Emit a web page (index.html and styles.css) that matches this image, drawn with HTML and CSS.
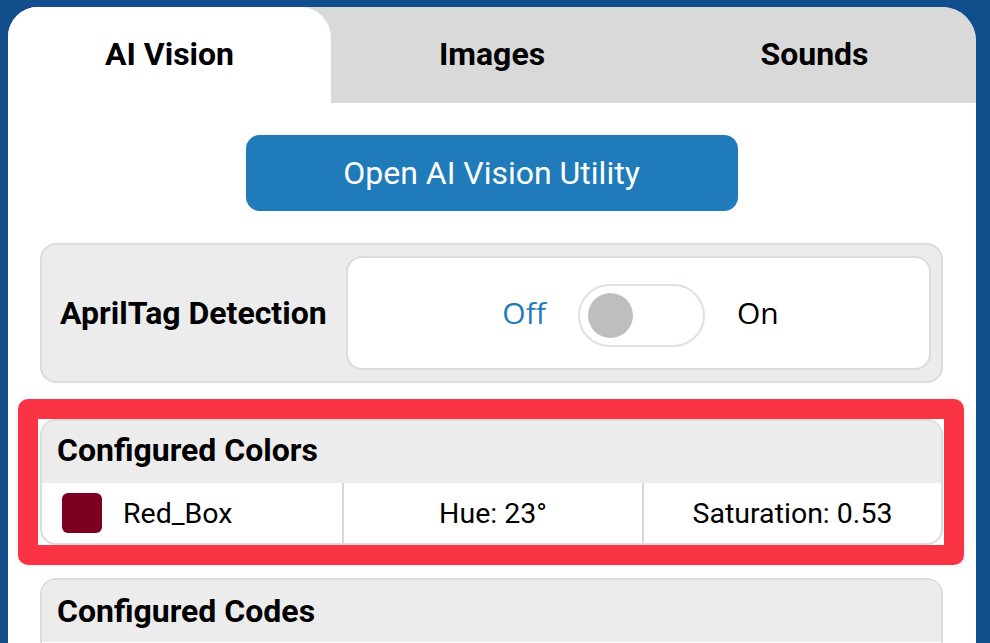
FILE: index.html
```html
<!DOCTYPE html>
<html>
<head>
<meta charset="utf-8">
<link rel="stylesheet" href="styles.css">
</head>
<body>
<div class="panel">
  <div class="tabs">
    <div class="tab active">AI Vision</div>
    <div class="tab">Images</div>
    <div class="tab">Sounds</div>
  </div>
  <div class="content">
    <div class="btn">Open AI Vision Utility</div>
    <div class="april">
      <div class="april-label">AprilTag Detection</div>
      <div class="switch-box">
        <span class="opt off">Off</span>
        <span class="toggle"><span class="knob"></span></span>
        <span class="opt">On</span>
      </div>
    </div>
    <div class="highlight">
      <div class="card">
        <div class="card-head">Configured Colors</div>
        <div class="card-row">
          <div class="cell first"><span class="swatch"></span><span>Red_Box</span></div>
          <div class="cell">Hue: 23°</div>
          <div class="cell">Saturation: 0.53</div>
        </div>
      </div>
    </div>
    <div class="card codes">
      <div class="card-head">Configured Codes</div>
      <div class="card-row"></div>
    </div>
  </div>
</div>
</body>
</html>
```
FILE: styles.css
```css
html, body {
  margin: 0;
  padding: 0;
  background: #124e8c;
  font-family: Roboto, "Liberation Sans", sans-serif;
  color: #000;
  overflow: hidden;
}
.panel {
  margin: 7px 0 0 8px;
  width: 968px;
  height: 660px;
  background: #fff;
  border-radius: 30px 34px 0 0;
  overflow: hidden;
}
.tabs {
  display: grid;
  grid-template-columns: 323px 322px 323px;
  height: 96px;
  background: #d9d9d9;
}
.tab {
  display: flex;
  align-items: center;
  justify-content: center;
  font-weight: 700;
  font-size: 32px;
  padding-bottom: 2px;
}
.tab.active {
  background: #fff;
  border-top-right-radius: 31px;
}
.content {
  padding: 32px 33px 0 32px;
  display: flex;
  flex-direction: column;
}
.btn {
  align-self: center;
  width: 492px;
  height: 76px;
  background: #1f7bb9;
  border-radius: 14px;
  color: #fff;
  font-size: 32px;
  display: flex;
  align-items: center;
  justify-content: center;
}
.april {
  margin-top: 32px;
  height: 140px;
  box-sizing: border-box;
  background: #edeced;
  border: 2px solid #dcdcdc;
  border-radius: 16px;
  display: flex;
  align-items: center;
  padding: 0 10px 0 18px;
}
.april-label {
  font-weight: 700;
  font-size: 32px;
  width: 286px;
}
.switch-box {
  flex: 1;
  height: 114px;
  box-sizing: border-box;
  background: #fff;
  border: 2px solid #dcdcdc;
  border-radius: 16px;
  display: flex;
  align-items: center;
  justify-content: center;
  gap: 32px;
  padding-left: 4px;
}
.opt {
  font-family: "Open Sans", Roboto, sans-serif;
  font-size: 30px;
  padding-bottom: 2px;
}
.opt.off {
  color: #1f7bb9;
}
.toggle {
  width: 127px;
  height: 63px;
  margin-top: 5px;
  box-sizing: border-box;
  border: 2px solid #dde1e6;
  border-radius: 32px;
  display: flex;
  align-items: center;
  padding-left: 8px;
}
.knob {
  width: 45px;
  height: 45px;
  border-radius: 50%;
  background: #bebebe;
}
.highlight {
  margin: 16px -21px 0 -22px;
  border: 20px solid #fa3444;
  border-radius: 10px;
  background: #fff;
  padding: 0 1px 0 2px;
  box-shadow: 0 0 6px rgba(0,0,0,0.08);
}
.card {
  box-sizing: border-box;
  border: 2px solid #dcdcdc;
  border-radius: 16px;
  overflow: hidden;
  background: #fff;
}
.card-head {
  background: #edeced;
  height: 62px;
  box-sizing: border-box;
  display: flex;
  align-items: center;
  padding: 0 0 4px 15px;
  font-weight: 700;
  font-size: 32px;
}
.codes .card-head {
  padding-bottom: 0;
}
.card-row {
  display: grid;
  grid-template-columns: 300px 300px 1fr;
  height: 60px;
}
.cell {
  display: flex;
  align-items: center;
  justify-content: center;
  font-size: 28.5px;
  border-left: 2px solid #d8d8d8;
}
.cell.first {
  border-left: none;
  justify-content: flex-start;
  padding-left: 20px;
  gap: 21px;
}
.swatch {
  width: 40px;
  height: 40px;
  border-radius: 6px;
  background: #7d0022;
}
.codes {
  margin-top: 13px;
}
```
